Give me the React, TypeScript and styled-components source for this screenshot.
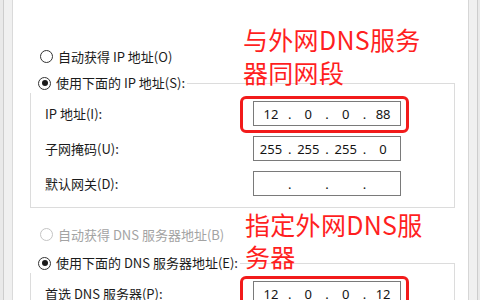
import { Fragment } from "react";
import styled, { createGlobalStyle } from "styled-components";

const GlobalStyle = createGlobalStyle`
    html, body {
        margin: 0;
        padding: 0;
        background: #ffffff;
    }
    #root {
        height: 300px;
    }
`;

const Frame = styled.div`
    display: flex;
    width: 480px;
    height: 300px;
    overflow: hidden;
    font-family: "Noto Sans CJK SC", "Noto Sans", sans-serif;
    font-size: 13px;
    color: #1b1b1b;
`;

const LeftEdge = styled.div`
    flex: 0 0 12px;
    border-right: 1px solid #dadada;
    background: linear-gradient(to right, #e9e9e9 0 3px, #cdcdcd 3px 4px, #f0f0f0 4px);
`;

const RightEdge = styled.div`
    flex: 0 0 11px;
    border-left: 1px solid #d6d6d6;
    background: linear-gradient(to right, #f0f0f0 0 8px, #cdcdcd 8px 9px, #e9e9e9 9px);
`;

const Page = styled.div`
    position: relative;
    flex: 1;
    display: flex;
    flex-direction: column;
    padding: 47px 13px 0 17px;
    background: #ffffff;
`;

const OptionRow = styled.label<{ $disabled?: boolean; $gap?: number }>`
    display: flex;
    align-items: center;
    gap: 5px;
    height: 20px;
    margin-top: ${(p) => p.$gap ?? 0}px;
    padding-left: 10px;
    color: ${(p) => (p.$disabled ? "#a3a3a3" : "#1b1b1b")};
    white-space: nowrap;
`;

const Radio = styled.span<{ $checked?: boolean; $disabled?: boolean }>`
    flex: 0 0 auto;
    display: flex;
    align-items: center;
    justify-content: center;
    width: 11px;
    height: 11px;
    border-radius: 50%;
    border: 1px solid ${(p) => (p.$disabled ? "#c4c4c4" : "#333333")};
    background: #ffffff;

    &::after {
        content: "";
        display: ${(p) => (p.$checked ? "block" : "none")};
        width: 6px;
        height: 6px;
        border-radius: 50%;
        background: #1b1b1b;
    }
`;

const Group = styled.fieldset<{ $gap: number }>`
    margin: ${(p) => p.$gap}px 0 0;
    padding: 0 0 11px 7px;
    min-width: 0;
    border: 1px solid #dcdcdc;
`;

const GroupTitle = styled.legend`
    padding: 0 2px 0 0;
    margin-left: -10px;
    line-height: 20px;
`;

const Fields = styled.div`
    display: grid;
    grid-template-columns: 208px 148px;
    row-gap: 10px;
    padding: 8px 0 0 7px;
`;

const FieldLabel = styled.span`
    display: flex;
    align-items: center;
    height: 25px;
    white-space: nowrap;
`;

const AddressBox = styled.div<{ $marked?: boolean }>`
    position: relative;
    display: flex;
    align-items: center;
    box-sizing: border-box;
    height: 25px;
    border: 1px solid #7a7a7a;
    background: #ffffff;
    font-family: "Noto Sans", "Noto Sans CJK SC", sans-serif;
    font-size: 13px;
    color: #141414;

    &::before {
        content: "";
        display: ${(p) => (p.$marked ? "block" : "none")};
        position: absolute;
        top: -6px;
        left: -14px;
        right: -9px;
        bottom: -8px;
        border: 3px solid #f21b1b;
        border-radius: 6px;
    }
`;

const Octet = styled.span`
    flex: 1;
    text-align: center;
`;

const Dot = styled.span`
    flex: 0 0 0;
    display: flex;
    justify-content: center;
    overflow: visible;
`;

const Note = styled.div<{ $left: number; $top: number; $line: number }>`
    position: absolute;
    left: ${(p) => p.$left}px;
    top: ${(p) => p.$top}px;
    font-family: "Noto Sans CJK SC", sans-serif;
    font-size: 25px;
    letter-spacing: 0.3px;
    line-height: ${(p) => p.$line}px;
    color: #ff1f1f;
    white-space: nowrap;
`;

function Address({ parts, marked }: { parts: string[]; marked?: boolean }) {
    return (
        <AddressBox $marked={marked}>
            {parts.map((p, i) => (
                <Fragment key={i}>
                    {i > 0 && <Dot>.</Dot>}
                    <Octet>{p}</Octet>
                </Fragment>
            ))}
        </AddressBox>
    );
}

export default function App() {
    return (
        <>
            <GlobalStyle />
            <Frame>
                <LeftEdge />
                <Page>
                    <OptionRow>
                        <Radio />
                        自动获得 IP 地址(O)
                    </OptionRow>

                    <Group $gap={7}>
                        <GroupTitle>
                            <OptionRow>
                                <Radio $checked />
                                使用下面的 IP 地址(S):
                            </OptionRow>
                        </GroupTitle>
                        <Fields>
                            <FieldLabel>IP 地址(I):</FieldLabel>
                            <Address parts={["12", "0", "0", "88"]} marked />
                            <FieldLabel>子网掩码(U):</FieldLabel>
                            <Address parts={["255", "255", "255", "0"]} />
                            <FieldLabel>默认网关(D):</FieldLabel>
                            <Address parts={["", "", "", ""]} />
                        </Fields>
                    </Group>

                    <OptionRow $disabled $gap={17}>
                        <Radio $disabled />
                        自动获得 DNS 服务器地址(B)
                    </OptionRow>

                    <Group $gap={9}>
                        <GroupTitle>
                            <OptionRow>
                                <Radio $checked />
                                使用下面的 DNS 服务器地址(E):
                            </OptionRow>
                        </GroupTitle>
                        <Fields>
                            <FieldLabel>首选 DNS 服务器(P):</FieldLabel>
                            <Address parts={["12", "0", "0", "12"]} marked />
                        </Fields>
                    </Group>

                    <Note $left={230} $top={23} $line={33}>
                        与外网DNS服务
                        <br />
                        器同网段
                    </Note>
                    <Note $left={232} $top={208} $line={32}>
                        指定外网DNS服
                        <br />
                        务器
                    </Note>
                </Page>
                <RightEdge />
            </Frame>
        </>
    );
}
